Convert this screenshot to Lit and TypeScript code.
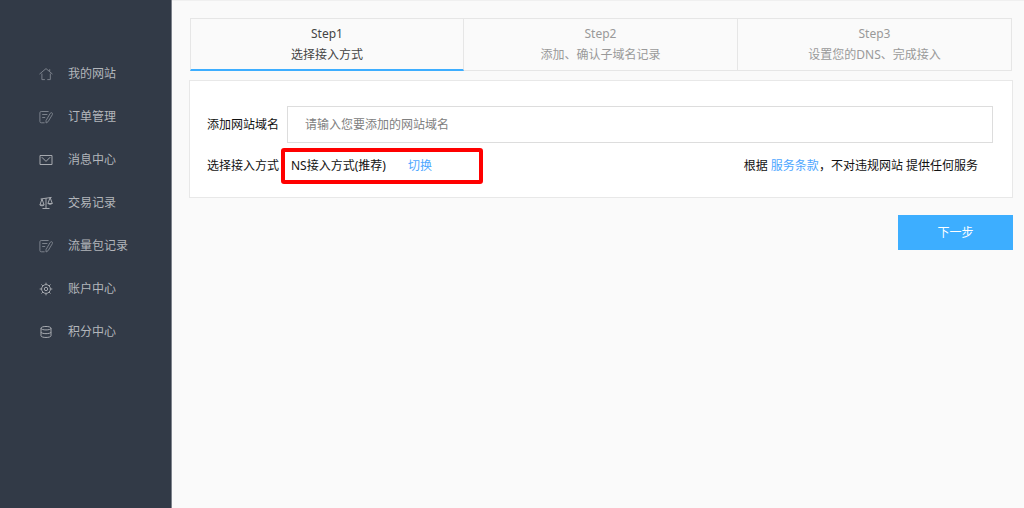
import { LitElement, html, css, svg } from "lit";
import { customElement, property, state } from "lit/decorators.js";
import { classMap } from "lit/directives/class-map.js";

const icons = {
  home: svg`<path d="M.5 7.1 7 1.6l6.5 5.5M10.7 4.4V2.2M2.9 6.5v6.1h3M8.3 12.6h3V6.5"/>`,
  order: svg`<path d="M9.6 1.5H2.2Q.9 1.5.9 2.8v8.7q0 1.3 1.3 1.3h3.4M3.2 4.5h5.2M3.2 7.5h3M11.2 3.4q1-1.2 1.9-.5.8.7.2 1.8l-4.2 7-2 1.3-.1-2.4z"/>`,
  mail: svg`<path d="M1 2.5h12v9H1zM2.8 4.2 7 8.4l4.2-4.2"/>`,
  scale: svg`<path d="M1.6 3 12.6 1.4M7 2.2v10.3M3.5 12.5h7M3 3 .9 9h4.2zM11.1 1.6 8.9 7.5h4.4zM.9 9q2.1 1.8 4.2 0M8.9 7.5q2.2 1.8 4.4 0"/>`,
  gear: svg`<circle cx="7" cy="7" r="4.4"/><circle cx="7" cy="7" r="1.7"/><path d="M7 .7v1.9M7 11.4v1.9M.7 7h1.9M11.4 7h1.9M2.5 2.5l1.4 1.4M10.1 10.1l1.4 1.4M11.5 2.5l-1.4 1.4M3.9 10.1l-1.4 1.4"/>`,
  coins: svg`<path d="M2 3.2C2 .9 12 .9 12 3.2S2 5.5 2 3.2v7.6c0 2.2 10 2.2 10 0V3.2M2 7c0 2.2 10 2.2 10 0"/>`,
};

type IconName = keyof typeof icons;

@customElement("side-menu")
class SideMenu extends LitElement {
  static styles = css`
    :host {
      display: block;
      box-sizing: border-box;
      padding-top: 52px;
      background: #323a47;
      border-right: 1px solid #7d828b;
    }
    .item {
      display: flex;
      align-items: center;
      gap: 15px;
      height: 43px;
      padding-left: 39px;
      color: #b3b6bb;
      text-decoration: none;
    }
    .icon {
      width: 14px;
      height: 14px;
      fill: none;
      stroke: #a6a9af;
    }
    .dim {
      stroke: #7b818b;
    }
  `;

  private items: { icon: IconName; label: string; dim?: boolean }[] = [
    { icon: "home", label: "我的网站", dim: true },
    { icon: "order", label: "订单管理", dim: true },
    { icon: "mail", label: "消息中心" },
    { icon: "scale", label: "交易记录" },
    { icon: "order", label: "流量包记录", dim: true },
    { icon: "gear", label: "账户中心" },
    { icon: "coins", label: "积分中心" },
  ];

  render() {
    return html`<nav>
      ${this.items.map(
        (i) => html`<a class="item" href="#">
          <svg class=${classMap({ icon: true, dim: !!i.dim })} viewBox="0 0 14 14" aria-hidden="true">${icons[i.icon]}</svg>
          <span>${i.label}</span>
        </a>`
      )}
    </nav>`;
  }
}

@customElement("step-bar")
class StepBar extends LitElement {
  static styles = css`
    :host {
      display: block;
    }
    .steps {
      display: grid;
      grid-template-columns: repeat(3, 1fr);
      margin: 0;
      padding: 0;
      list-style: none;
    }
    .step {
      box-sizing: border-box;
      height: 53px;
      padding-top: 4px;
      border: 1px solid #e6e6e6;
      border-left: 0;
      color: #999;
      text-align: center;
      line-height: 21px;
    }
    .step:first-child {
      border-left: 1px solid #e6e6e6;
    }
    .title,
    .text {
      display: block;
    }
    .step.active {
      border-bottom: 2px solid #3daeff;
      color: #444;
    }
  `;

  @property({ type: Number }) current = 1;

  render() {
    const labels = ["选择接入方式", "添加、确认子域名记录", "设置您的DNS、完成接入"];
    return html`<ol class="steps">
      ${labels.map(
        (label, n) => html`<li class=${classMap({ step: true, active: n + 1 === this.current })}>
          <span class="title">Step${n + 1}</span>
          <span class="text">${label}</span>
        </li>`
      )}
    </ol>`;
  }
}

@customElement("app-root")
class AppRoot extends LitElement {
  static styles = css`
    :host {
      display: grid;
      grid-template-columns: 172px 1fr;
      min-height: 100vh;
      background: #fafafa;
      color: #111;
      font: 12px/20px "Noto Sans", "Noto Sans CJK SC", sans-serif;
    }
    .main {
      padding: 17px 11px 0 17px;
      border-top: 1px solid #f0f0f0;
    }
    .bar {
      margin: 0 1px 9px;
    }
    .card {
      display: flex;
      flex-direction: column;
      gap: 5px;
      padding: 25px 19px 13px 17px;
      background: #fff;
      border: 1px solid #e8e8e8;
    }
    .row {
      display: flex;
      align-items: center;
    }
    .label {
      width: 74px;
      flex: none;
    }
    .domain {
      flex: 1;
      min-width: 0;
      box-sizing: border-box;
      height: 37px;
      margin-left: 6px;
      padding: 0 17px;
      border: 1px solid #ddd;
      background: #fff;
      color: #333;
      font: inherit;
      outline: none;
    }
    .domain::placeholder {
      color: #808080;
      opacity: 1;
    }
    .method {
      display: flex;
      align-items: center;
      gap: 22px;
      box-sizing: border-box;
      width: 202px;
      height: 36px;
      padding-left: 6px;
      border: 4px solid #f00;
      border-radius: 3px;
    }
    .terms {
      margin-left: auto;
      padding-right: 15px;
    }
    .link {
      color: #4da6ff;
      text-decoration: none;
    }
    .actions {
      display: flex;
      justify-content: flex-end;
      margin-top: 17px;
    }
    .next {
      width: 115px;
      height: 35px;
      padding: 0;
      border: 0;
      background: #3daeff;
      color: #fff;
      font: inherit;
      cursor: pointer;
    }
  `;

  @state() private domain = "";

  render() {
    return html`
      <side-menu></side-menu>
      <main class="main">
        <step-bar class="bar" current="1"></step-bar>
        <section class="card">
          <div class="row">
            <label class="label" for="domain">添加网站域名</label>
            <input
              class="domain"
              id="domain"
              type="text"
              placeholder="请输入您要添加的网站域名"
              .value=${this.domain}
              @input=${(e: Event) => (this.domain = (e.target as HTMLInputElement).value)}
            />
          </div>
          <div class="row">
            <span class="label">选择接入方式</span>
            <div class="method"><span>NS接入方式(推荐)</span><a class="link" href="#">切换</a></div>
            <div class="terms">根据 <a class="link" href="#">服务条款</a>，不对违规网站 提供任何服务</div>
          </div>
        </section>
        <div class="actions"><button class="next" type="button">下一步</button></div>
      </main>
    `;
  }
}
